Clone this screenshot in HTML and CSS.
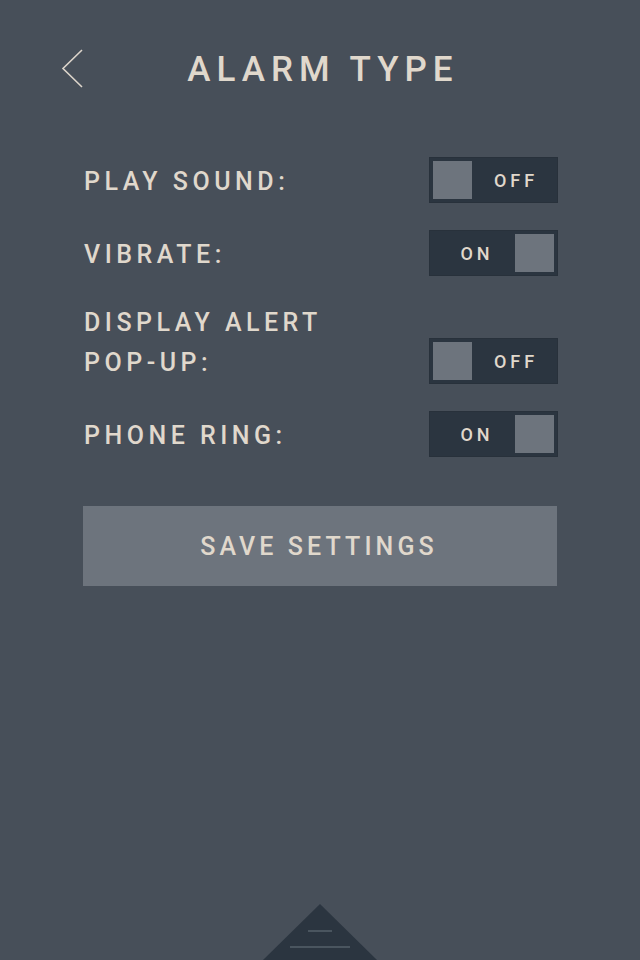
FILE: index.html
```html
<!DOCTYPE html>
<html>
<head>
<meta charset="utf-8">
<link rel="stylesheet" href="styles.css">
</head>
<body>
<div class="screen">
  <header class="header">
    <svg class="back" width="24" height="40" viewBox="0 0 24 40"><polyline points="21,1 2,19.5 21,38" fill="none" stroke="#ddd5cb" stroke-width="1.6"/></svg>
    <h1 class="title">ALARM TYPE</h1>
  </header>
  <main class="settings">
    <div class="row">
      <div class="label">PLAY SOUND:</div>
      <div class="toggle off"><span class="knob"></span><span class="state">OFF</span></div>
    </div>
    <div class="row">
      <div class="label">VIBRATE:</div>
      <div class="toggle on"><span class="state">ON</span><span class="knob"></span></div>
    </div>
    <div class="row">
      <div class="label">DISPLAY ALERT<br>POP-UP:</div>
      <div class="toggle off"><span class="knob"></span><span class="state">OFF</span></div>
    </div>
    <div class="row">
      <div class="label">PHONE RING:</div>
      <div class="toggle on"><span class="state">ON</span><span class="knob"></span></div>
    </div>
    <button class="save">SAVE SETTINGS</button>
  </main>
  <div class="drawer">
    <svg width="114" height="56" viewBox="0 0 114 56"><polygon points="57,0 114,56 0,56" fill="#2b3540"/><line x1="45" y1="27" x2="69" y2="27" stroke="#56606a" stroke-width="1.5"/><line x1="27" y1="43" x2="87" y2="43" stroke="#56606a" stroke-width="1.5"/></svg>
  </div>
</div>
</body>
</html>
```
FILE: styles.css
```css
* { box-sizing: border-box; }
html, body { margin: 0; padding: 0; }
body {
  background: #474f59;
  font-family: Roboto, "Liberation Sans", sans-serif;
  color: #e0d8cc;
}
.screen {
  width: 640px;
  height: 960px;
  position: relative;
  overflow: hidden;
  display: flex;
  flex-direction: column;
}
.header {
  height: 138px;
  display: flex;
  align-items: center;
  justify-content: center;
  position: relative;
}
.back {
  position: absolute;
  left: 61px;
  top: 49px;
}
.title {
  margin: 0;
  font-size: 35px;
  font-weight: 500;
  letter-spacing: 6px;
  padding-left: 6px;
  line-height: 40px;
  position: relative;
  top: 1px;
}
.settings {
  padding: 19px 83px 0 83px;
  display: flex;
  flex-direction: column;
  gap: 27px;
}
.row {
  display: flex;
  justify-content: space-between;
  align-items: flex-end;
}
.label {
  font-size: 25px;
  font-weight: 500;
  letter-spacing: 4.5px;
  line-height: 40px;
  margin-bottom: 1px;
  padding-left: 1px;
}
.toggle {
  width: 129px;
  height: 46px;
  margin-right: -1px;
  background: #2b3540;
  border: 1px solid #28313b;
  padding: 3px;
  display: flex;
  align-items: center;
}
.knob {
  width: 39px;
  height: 38px;
  background: #6d747d;
  display: block;
}
.state {
  flex: 1;
  text-align: center;
  font-size: 18px;
  font-weight: 500;
  letter-spacing: 4px;
  padding-left: 6px;
}
.save {
  margin-top: 22px;
  height: 80px;
  width: 100%;
  background: #6d747d;
  border: none;
  color: #e0d8cc;
  font-family: inherit;
  font-size: 25px;
  font-weight: 500;
  letter-spacing: 4.1px;
  padding-left: 4px;
  padding-top: 2px;
}
.drawer {
  position: absolute;
  left: 263px;
  bottom: 0;
  width: 114px;
  height: 56px;
}
.drawer svg { display: block; }
```
